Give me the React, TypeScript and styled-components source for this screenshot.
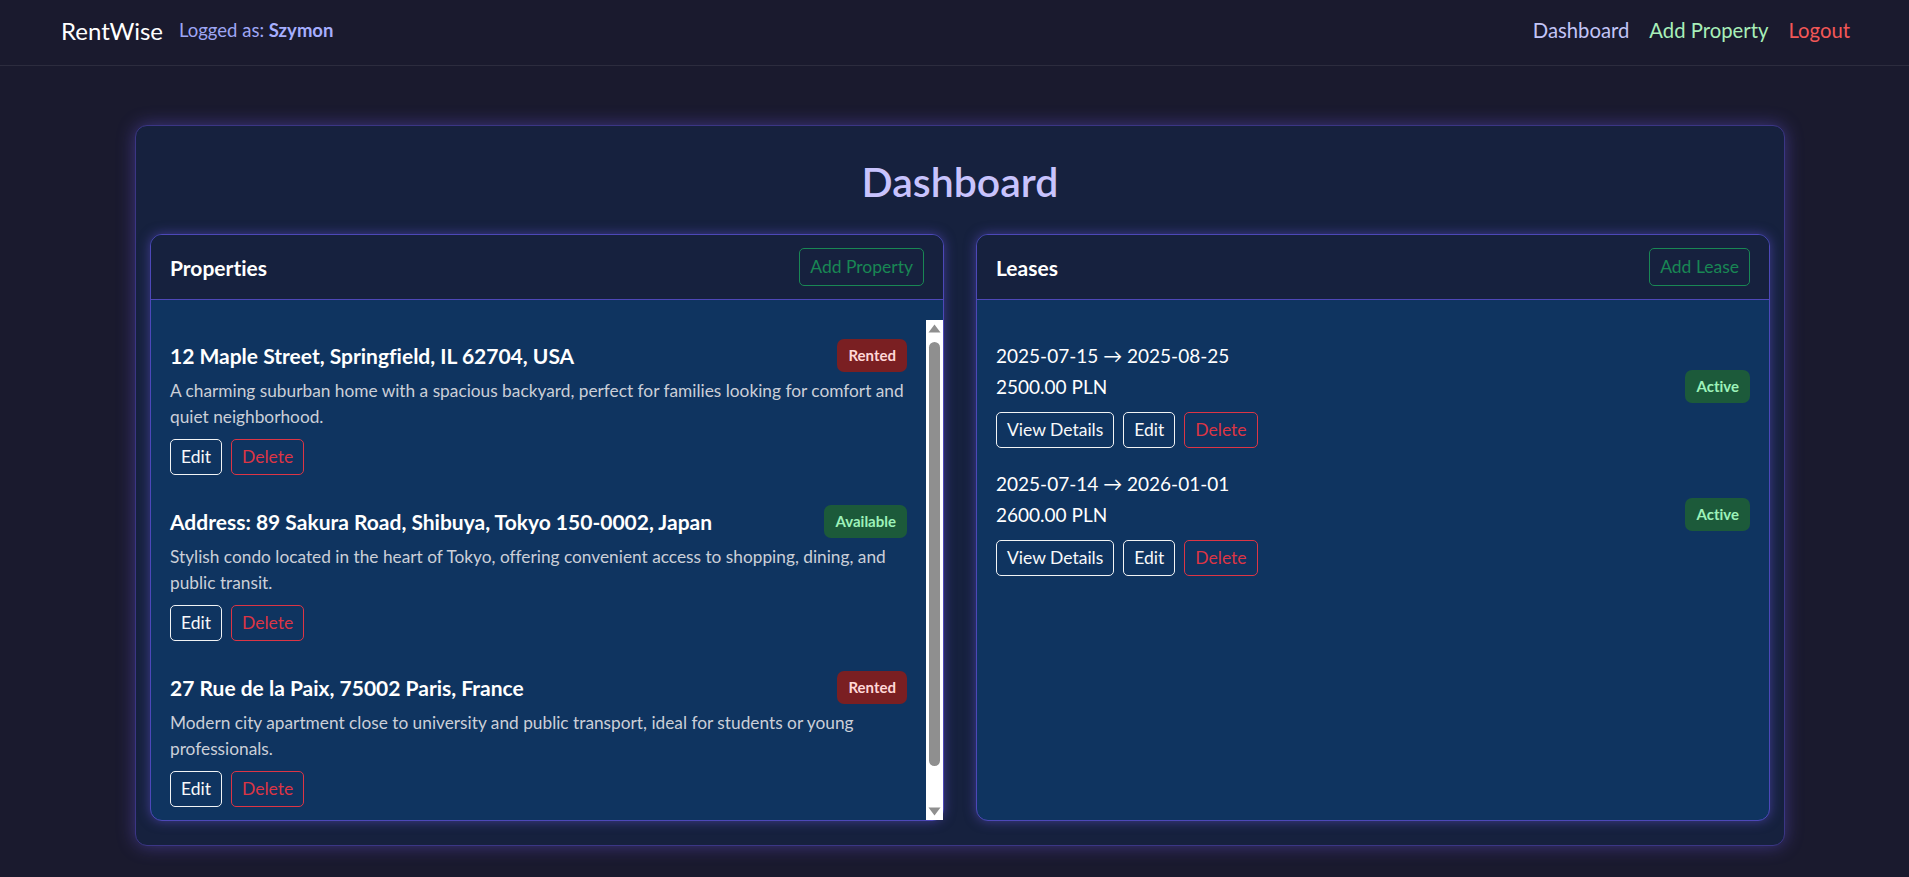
import React from "react";
import styled, { createGlobalStyle } from "styled-components";

const GlobalStyle = createGlobalStyle`
  * { box-sizing: border-box; }
  html, body { margin: 0; padding: 0; }
  body {
    background: #1a1a2e;
    font-family: Lato, "Noto Sans", "DejaVu Sans", sans-serif;
    font-variant-ligatures: none;
    color: #ffffff;
  }
`;

const NavBar = styled.nav`
  display: flex;
  align-items: center;
  justify-content: space-between;
  height: 66px;
  padding: 0 59px 5px 61px;
  background: #1a1a2e;
  border-bottom: 1px solid #2c2c3e;
`;

const NavLeft = styled.div`
  display: flex;
  align-items: center;
  gap: 16px;
`;

const Brand = styled.a`
  font-size: 24px;
  color: #ffffff;
  text-decoration: none;
`;

const LoggedAs = styled.span`
  font-size: 18.5px;
  color: #9ea6f4;
  strong {
    font-weight: 700;
    color: #a6aefe;
  }
`;

const NavLinks = styled.div`
  display: flex;
  align-items: center;
  gap: 20px;
`;

const NavLink = styled.a<{ $color: string }>`
  font-size: 20.3px;
  color: ${(p) => p.$color};
  text-decoration: none;
`;

const Main = styled.main`
  padding: 59px 124px 33px 135px;
`;

const Card = styled.section`
  background: #16213e;
  border: 1px solid #3b3685;
  border-radius: 12px;
  box-shadow: 0 0 18px rgba(108, 88, 230, 0.45);
  padding: 32px 14px 24px;
`;

const Heading = styled.h1`
  margin: 0 0 28px;
  text-align: center;
  font-size: 41px;
  line-height: 48px;
  font-weight: 600;
  color: #c8c3fd;
`;

const Columns = styled.div`
  display: grid;
  grid-template-columns: 1fr 1fr;
  gap: 32px;
  align-items: stretch;
`;

const Panel = styled.div`
  display: flex;
  flex-direction: column;
  border: 1px solid #4d48b8;
  border-radius: 12px;
  background: #0f3460;
  box-shadow: 0 0 12px rgba(108, 88, 230, 0.5);
`;

const PanelHeader = styled.div`
  display: flex;
  align-items: center;
  justify-content: space-between;
  height: 65px;
  padding: 0 19px;
  background: #16213e;
  border-radius: 11px 11px 0 0;
  border-bottom: 1px solid #4d48b8;
`;

const PanelTitle = styled.h2`
  margin: 0;
  font-size: 21px;
  font-weight: 700;
  color: #ffffff;
`;

const Button = styled.button<{ $tone: "light" | "danger" | "success" }>`
  font-family: inherit;
  font-size: 17.5px;
  line-height: 22px;
  padding: 6px 10px;
  border-radius: 5px;
  background: transparent;
  cursor: pointer;
  border: 1px solid
    ${(p) =>
      p.$tone === "light" ? "#f1f3f5" : p.$tone === "danger" ? "#dc3545" : "#198754"};
  color: ${(p) =>
    p.$tone === "light" ? "#f8f9fa" : p.$tone === "danger" ? "#dc3545" : "#198754"};
`;

const HeaderButton = styled(Button)`
  line-height: 24px;
  padding: 6px 10px;
`;

const PanelBody = styled.div`
  flex: 1;
  padding-top: 20px;
  border-radius: 0 0 11px 11px;
`;

const ScrollArea = styled.div`
  display: flex;
  height: 500px;
`;

const ScrollContent = styled.div`
  flex: 1;
  min-width: 0;
  overflow: hidden;
`;

const ScrollTrack = styled.div`
  flex: 0 0 17px;
  display: flex;
  flex-direction: column;
  align-items: center;
  background: #ffffff;
`;

const ScrollArrow = styled.svg`
  display: block;
  flex-shrink: 0;
`;

const ThumbSlot = styled.div`
  flex: 1;
  width: 100%;
  padding: 5px 3px 0;
`;

const Thumb = styled.div`
  height: 424px;
  border-radius: 6px;
  background: #8f8f8f;
`;

const PropertyItem = styled.article`
  padding: 19px 19px 11px;
`;

const TitleRow = styled.div`
  display: flex;
  align-items: center;
  justify-content: space-between;
  gap: 12px;
  min-height: 33px;
  margin-bottom: 6px;
`;

const ItemTitle = styled.h3`
  margin: 0;
  font-size: 21px;
  font-weight: 700;
  color: #ffffff;
`;

const Badge = styled.span<{ $kind: "rented" | "ok" }>`
  flex-shrink: 0;
  font-size: 15px;
  font-weight: 700;
  line-height: 19px;
  padding: 7px 11px;
  border-radius: 7px;
  background: ${(p) => (p.$kind === "rented" ? "#7a1f22" : "#1c5a3a")};
  color: ${(p) => (p.$kind === "rented" ? "#ffd7d7" : "#9df2b9")};
`;

const Description = styled.p`
  margin: 0;
  font-size: 17.3px;
  line-height: 25.5px;
  color: #cbcfd8;
`;

const Actions = styled.div`
  display: flex;
  gap: 9px;
  margin-top: 10px;
`;

const LeaseItem = styled.article`
  padding: 22px 19px 0;
`;

const LeaseDates = styled.div`
  font-size: 19px;
  line-height: 27px;
`;

const PriceRow = styled.div`
  display: flex;
  align-items: center;
  justify-content: space-between;
  height: 32px;
  margin-top: 1px;
  font-size: 19px;
`;

const properties = [
  {
    title: "12 Maple Street, Springfield, IL 62704, USA",
    desc: "A charming suburban home with a spacious backyard, perfect for families looking for comfort and quiet neighborhood.",
    status: "Rented",
  },
  {
    title: "Address: 89 Sakura Road, Shibuya, Tokyo 150-0002, Japan",
    desc: "Stylish condo located in the heart of Tokyo, offering convenient access to shopping, dining, and public transit.",
    status: "Available",
  },
  {
    title: "27 Rue de la Paix, 75002 Paris, France",
    desc: "Modern city apartment close to university and public transport, ideal for students or young professionals.",
    status: "Rented",
  },
];

const leases = [
  { from: "2025-07-15", to: "2025-08-25", price: "2500.00 PLN" },
  { from: "2025-07-14", to: "2026-01-01", price: "2600.00 PLN" },
];

export default function App() {
  return (
    <>
      <GlobalStyle />
      <NavBar>
        <NavLeft>
          <Brand href="#">RentWise</Brand>
          <LoggedAs>
            Logged as: <strong>Szymon</strong>
          </LoggedAs>
        </NavLeft>
        <NavLinks>
          <NavLink href="#" $color="#c3c5f7">Dashboard</NavLink>
          <NavLink href="#" $color="#a8efb9">Add Property</NavLink>
          <NavLink href="#" $color="#f25757">Logout</NavLink>
        </NavLinks>
      </NavBar>
      <Main>
        <Card>
          <Heading>Dashboard</Heading>
          <Columns>
            <Panel>
              <PanelHeader>
                <PanelTitle>Properties</PanelTitle>
                <HeaderButton $tone="success">Add Property</HeaderButton>
              </PanelHeader>
              <PanelBody>
                <ScrollArea>
                  <ScrollContent>
                    {properties.map((p) => (
                      <PropertyItem key={p.title}>
                        <TitleRow>
                          <ItemTitle>{p.title}</ItemTitle>
                          <Badge $kind={p.status === "Rented" ? "rented" : "ok"}>{p.status}</Badge>
                        </TitleRow>
                        <Description>{p.desc}</Description>
                        <Actions>
                          <Button $tone="light">Edit</Button>
                          <Button $tone="danger">Delete</Button>
                        </Actions>
                      </PropertyItem>
                    ))}
                  </ScrollContent>
                  <ScrollTrack aria-hidden="true">
                    <ScrollArrow width="17" height="17" viewBox="0 0 17 17">
                      <path d="M2.5 12.5 L8.5 4.5 L14.5 12.5 Z" fill="#8f8f8f" />
                    </ScrollArrow>
                    <ThumbSlot>
                      <Thumb />
                    </ThumbSlot>
                    <ScrollArrow width="17" height="17" viewBox="0 0 17 17">
                      <path d="M2.5 4.5 L8.5 12.5 L14.5 4.5 Z" fill="#8f8f8f" />
                    </ScrollArrow>
                  </ScrollTrack>
                </ScrollArea>
              </PanelBody>
            </Panel>
            <Panel>
              <PanelHeader>
                <PanelTitle>Leases</PanelTitle>
                <HeaderButton $tone="success">Add Lease</HeaderButton>
              </PanelHeader>
              <PanelBody>
                {leases.map((l) => (
                  <LeaseItem key={l.from}>
                    <LeaseDates>
                      {l.from} → {l.to}
                    </LeaseDates>
                    <PriceRow>
                      <span>{l.price}</span>
                      <Badge $kind="ok">Active</Badge>
                    </PriceRow>
                    <Actions>
                      <Button $tone="light">View Details</Button>
                      <Button $tone="light">Edit</Button>
                      <Button $tone="danger">Delete</Button>
                    </Actions>
                  </LeaseItem>
                ))}
              </PanelBody>
            </Panel>
          </Columns>
        </Card>
      </Main>
    </>
  );
}
